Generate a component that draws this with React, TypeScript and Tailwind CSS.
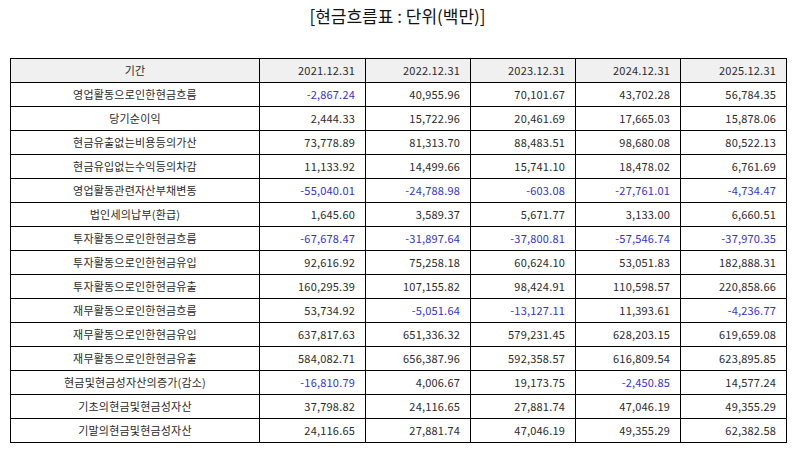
/* 현금흐름표 — 단위(백만) */

const years = ["2021.12.31", "2022.12.31", "2023.12.31", "2024.12.31", "2025.12.31"];

const rows: [string, string[]][] = [
  ["영업활동으로인한현금흐름", ["-2,867.24", "40,955.96", "70,101.67", "43,702.28", "56,784.35"]],
  ["당기순이익", ["2,444.33", "15,722.96", "20,461.69", "17,665.03", "15,878.06"]],
  ["현금유출없는비용등의가산", ["73,778.89", "81,313.70", "88,483.51", "98,680.08", "80,522.13"]],
  ["현금유입없는수익등의차감", ["11,133.92", "14,499.66", "15,741.10", "18,478.02", "6,761.69"]],
  ["영업활동관련자산부채변동", ["-55,040.01", "-24,788.98", "-603.08", "-27,761.01", "-4,734.47"]],
  ["법인세의납부(환급)", ["1,645.60", "3,589.37", "5,671.77", "3,133.00", "6,660.51"]],
  ["투자활동으로인한현금흐름", ["-67,678.47", "-31,897.64", "-37,800.81", "-57,546.74", "-37,970.35"]],
  ["투자활동으로인한현금유입", ["92,616.92", "75,258.18", "60,624.10", "53,051.83", "182,888.31"]],
  ["투자활동으로인한현금유출", ["160,295.39", "107,155.82", "98,424.91", "110,598.57", "220,858.66"]],
  ["재무활동으로인한현금흐름", ["53,734.92", "-5,051.64", "-13,127.11", "11,393.61", "-4,236.77"]],
  ["재무활동으로인한현금유입", ["637,817.63", "651,336.32", "579,231.45", "628,203.15", "619,659.08"]],
  ["재무활동으로인한현금유출", ["584,082.71", "656,387.96", "592,358.57", "616,809.54", "623,895.85"]],
  ["현금및현금성자산의증가(감소)", ["-16,810.79", "4,006.67", "19,173.75", "-2,450.85", "14,577.24"]],
  ["기초의현금및현금성자산", ["37,798.82", "24,116.65", "27,881.74", "47,046.19", "49,355.29"]],
  ["기말의현금및현금성자산", ["24,116.65", "27,881.74", "47,046.19", "49,355.29", "62,382.58"]],
];

const cell = "border border-black h-6 p-0 leading-none";

export default function App() {
  return (
    <div className="w-[795px] h-[452px] bg-white font-['Noto_Sans_CJK_KR','Noto_Sans',sans-serif] text-[#2a2a2a]">
      {/* ── Title ── */}
      <div className="h-[58px] pt-[5px] text-center text-[17px] leading-[22px] text-[#111]">
        [현금흐름표 : 단위(백만)]
      </div>

      {/* ── Table ── */}
      <table className="ml-[10px] w-[776px] table-fixed border-collapse text-[11px] tracking-[0.2px]">
        <colgroup>
          <col className="w-[249px]" />
          <col className="w-[106px]" />
          <col className="w-[105px]" />
          <col className="w-[105px]" />
          <col className="w-[105px]" />
          <col className="w-[106px]" />
        </colgroup>
        <thead>
          <tr className="bg-[#f0f0f0]">
            <th className={`${cell} font-normal text-center`}>기간</th>
            {years.map((y) => (
              <th key={y} className={`${cell} font-normal text-right pr-[10px]`}>
                {y}
              </th>
            ))}
          </tr>
        </thead>
        <tbody>
          {rows.map(([label, vals]) => (
            <tr key={label}>
              <td className={`${cell} text-center`}>{label}</td>
              {vals.map((v, i) => (
                <td
                  key={i}
                  className={`${cell} text-right pr-[10px] ${v.startsWith("-") ? "text-[#3232d2]" : ""}`}
                >
                  {v}
                </td>
              ))}
            </tr>
          ))}
        </tbody>
      </table>
    </div>
  );
}
